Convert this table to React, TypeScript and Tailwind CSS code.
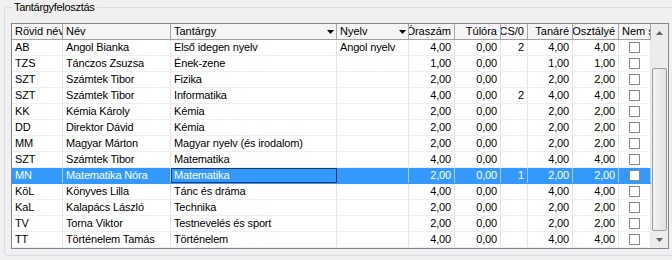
import React from "react";

type Row = {
  rovid: string;
  nev: string;
  tantargy: string;
  nyelv: string;
  oraszam: string;
  tulora: string;
  csop: string;
  tanare: string;
  osztalye: string;
};

type Col = {
  key: keyof Row | "nem";
  label: string;
  width: string;
  numeric?: boolean;
  filter?: boolean;
};

const columns: Col[] = [
  { key: "rovid", label: "Rövid név", width: "w-[51px]" },
  { key: "nev", label: "Név", width: "w-[108px]" },
  { key: "tantargy", label: "Tantárgy", width: "w-[166px]", filter: true },
  { key: "nyelv", label: "Nyelv", width: "w-[72px]", filter: true },
  { key: "oraszam", label: "Óraszám", width: "w-[46px]", numeric: true },
  { key: "tulora", label: "Túlóra", width: "w-[46px]", numeric: true },
  { key: "csop", label: "CS/0", width: "w-[27px]", numeric: true },
  { key: "tanare", label: "Tanáré", width: "w-[45px]", numeric: true },
  { key: "osztalye", label: "Osztályé", width: "w-[46px]", numeric: true },
  { key: "nem", label: "Nem számít", width: "w-[32px]" },
];

const rows: Row[] = [
  { rovid: "AB", nev: "Angol Bianka", tantargy: "Első idegen nyelv", nyelv: "Angol nyelv", oraszam: "4,00", tulora: "0,00", csop: "2", tanare: "4,00", osztalye: "4,00" },
  { rovid: "TZS", nev: "Tánczos Zsuzsa", tantargy: "Ének-zene", nyelv: "", oraszam: "1,00", tulora: "0,00", csop: "", tanare: "1,00", osztalye: "1,00" },
  { rovid: "SZT", nev: "Számtek Tibor", tantargy: "Fizika", nyelv: "", oraszam: "2,00", tulora: "0,00", csop: "", tanare: "2,00", osztalye: "2,00" },
  { rovid: "SZT", nev: "Számtek Tibor", tantargy: "Informatika", nyelv: "", oraszam: "4,00", tulora: "0,00", csop: "2", tanare: "4,00", osztalye: "4,00" },
  { rovid: "KK", nev: "Kémia Károly", tantargy: "Kémia", nyelv: "", oraszam: "2,00", tulora: "0,00", csop: "", tanare: "2,00", osztalye: "2,00" },
  { rovid: "DD", nev: "Direktor Dávid", tantargy: "Kémia", nyelv: "", oraszam: "2,00", tulora: "0,00", csop: "", tanare: "2,00", osztalye: "2,00" },
  { rovid: "MM", nev: "Magyar Márton", tantargy: "Magyar nyelv (és irodalom)", nyelv: "", oraszam: "2,00", tulora: "0,00", csop: "", tanare: "2,00", osztalye: "2,00" },
  { rovid: "SZT", nev: "Számtek Tibor", tantargy: "Matematika", nyelv: "", oraszam: "4,00", tulora: "0,00", csop: "", tanare: "4,00", osztalye: "4,00" },
  { rovid: "MN", nev: "Matematika Nóra", tantargy: "Matematika", nyelv: "", oraszam: "2,00", tulora: "0,00", csop: "1", tanare: "2,00", osztalye: "2,00" },
  { rovid: "KöL", nev: "Könyves Lilla", tantargy: "Tánc és dráma", nyelv: "", oraszam: "4,00", tulora: "0,00", csop: "", tanare: "4,00", osztalye: "4,00" },
  { rovid: "KaL", nev: "Kalapács László", tantargy: "Technika", nyelv: "", oraszam: "2,00", tulora: "0,00", csop: "", tanare: "2,00", osztalye: "2,00" },
  { rovid: "TV", nev: "Torna Viktor", tantargy: "Testnevelés és sport", nyelv: "", oraszam: "2,00", tulora: "0,00", csop: "", tanare: "2,00", osztalye: "2,00" },
  { rovid: "TT", nev: "Történelem Tamás", tantargy: "Történelem", nyelv: "", oraszam: "4,00", tulora: "0,00", csop: "", tanare: "4,00", osztalye: "4,00" },
];

const SELECTED_ROW = 8;

function FilterArrow() {
  return (
    <svg width="7" height="4" viewBox="0 0 7 4" className="shrink-0">
      <polygon points="0,0 7,0 3.5,4" fill="#000" />
    </svg>
  );
}

function ScrollArrow({ up }: { up?: boolean }) {
  return (
    <div className="flex h-[17px] items-center justify-center">
      <svg width="7" height="4" viewBox="0 0 7 4">
        <polygon points={up ? "0,4 7,4 3.5,0" : "0,0 7,0 3.5,4"} fill="#606060" />
      </svg>
    </div>
  );
}

function HeaderCell({ col }: { col: Col }) {
  if (col.numeric) {
    return (
      <div className={`${col.width} flex shrink-0 justify-end overflow-hidden border-r border-[#a9a9a9] pr-[3px]`}>
        <span className="whitespace-nowrap">{col.label}</span>
      </div>
    );
  }
  return (
    <div className={`${col.width} flex shrink-0 items-center justify-between overflow-hidden border-r border-[#a9a9a9] pl-[3px] pr-[2px]`}>
      <span className="whitespace-nowrap">{col.label}</span>
      {col.filter && <FilterArrow />}
    </div>
  );
}

function Checkbox() {
  return <div className="h-[11px] w-[11px] border border-[#8a8a8a] bg-white" />;
}

function BodyCell({ col, row, selected }: { col: Col; row: Row; selected: boolean }) {
  const line = selected ? "border-[#9ccdff]" : "border-[#e4e4e4]";
  if (col.key === "nem") {
    return (
      <div className={`${col.width} flex shrink-0 items-center justify-center border-r ${line}`}>
        <Checkbox />
      </div>
    );
  }
  const value = row[col.key];
  const focused = selected && col.key === "tantargy";
  return (
    <div
      className={`${col.width} flex shrink-0 overflow-hidden whitespace-nowrap border-r ${line} ${
        col.numeric ? "justify-end pr-[3px]" : "pl-[3px]"
      } ${focused ? "outline outline-1 -outline-offset-1 outline-[#1d3b5c]" : ""}`}
    >
      {value}
    </div>
  );
}

export default function App() {
  return (
    <div className="h-[260px] w-[672px] overflow-hidden bg-[#f0f0f0] font-['Liberation_Sans',Arial,sans-serif] text-[11px] text-black">
      <fieldset className="ml-[4px] h-[256px] w-[667px] rounded-[3px] border border-[#d5dfe5] px-[6px]">
        <legend className="ml-[1px] px-[2px] leading-[14px] tracking-[-0.3px]">Tantárgyfelosztás</legend>

        <div className="mt-[9px] flex h-[226px] w-[658px] border border-[#828790] bg-white">
          <div className="flex w-[639px] flex-col tracking-[-0.15px]">
            <div className="flex h-[16px] border-b border-[#a0a0a0] bg-[#f5f5f5] leading-[15px] tracking-normal">
              {columns.map((col) => (
                <HeaderCell key={col.key} col={col} />
              ))}
            </div>
            {rows.map((row, i) => {
              const selected = i === SELECTED_ROW;
              return (
                <div
                  key={i}
                  className={`flex h-[16px] border-b leading-[15px] ${
                    selected ? "border-[#3399ff] bg-[#3399ff] text-white" : "border-[#efefef]"
                  }`}
                >
                  {columns.map((col) => (
                    <BodyCell key={col.key} col={col} row={row} selected={selected} />
                  ))}
                </div>
              );
            })}
          </div>

          {/* vertical scrollbar */}
          <div className="flex w-[17px] flex-col bg-[#ececec]">
            <ScrollArrow up />
            <div className="flex flex-1 flex-col">
              <div className="h-[27px]" />
              <div className="mx-[1px] flex-1 rounded-[2px] border border-[#9d9d9d] bg-gradient-to-r from-[#f4f4f4] to-[#e2e2e2]" />
            </div>
            <ScrollArrow />
          </div>
        </div>
      </fieldset>
    </div>
  );
}
